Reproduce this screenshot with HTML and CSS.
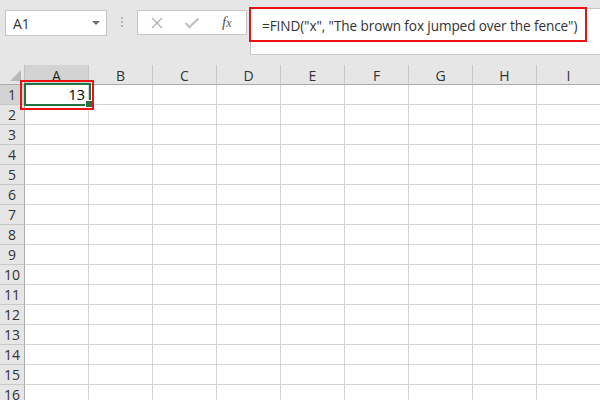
FILE: index.html
```html
<!DOCTYPE html>
<html>
<head>
<meta charset="utf-8">
<link rel="stylesheet" href="styles.css">
</head>
<body>
<div class="app">
  <div class="toolbar">
    <div class="namebox">
      <span class="ref">A1</span>
      <span class="caret"></span>
    </div>
    <div class="grip"><i></i><i></i><i></i></div>
    <div class="fbuttons">
      <svg class="ico" width="14" height="12" viewBox="0 0 14 12"><path d="M2 1 L12 11 M12 1 L2 11" stroke="#b3b3b3" stroke-width="1.3" fill="none"/></svg>
      <svg class="ico" width="16" height="12" viewBox="0 0 16 12"><path d="M1.5 6 L5.5 10 L14.5 1.5" stroke="#c4c4c4" stroke-width="2.4" fill="none"/></svg>
      <span class="fx"><i>f</i><i class="x">x</i></span>
    </div>
    <div class="formula">
      <span class="ftext">=FIND("x", "The brown fox jumped over the fence")</span>
      <div class="hilite"></div>
    </div>
  </div>
  <div class="sheet">
    <div class="grid">
      <div class="corner"><span class="tri"></span></div>
      <div class="ch sel">A</div><div class="ch">B</div><div class="ch">C</div><div class="ch">D</div><div class="ch">E</div><div class="ch">F</div><div class="ch">G</div><div class="ch">H</div><div class="ch">I</div>
      <div class="rh sel">1</div><div class="c num">13</div><div class="c"></div><div class="c"></div><div class="c"></div><div class="c"></div><div class="c"></div><div class="c"></div><div class="c"></div><div class="c"></div>
      <div class="rh">2</div><div class="c"></div><div class="c"></div><div class="c"></div><div class="c"></div><div class="c"></div><div class="c"></div><div class="c"></div><div class="c"></div><div class="c"></div>
      <div class="rh">3</div><div class="c"></div><div class="c"></div><div class="c"></div><div class="c"></div><div class="c"></div><div class="c"></div><div class="c"></div><div class="c"></div><div class="c"></div>
      <div class="rh">4</div><div class="c"></div><div class="c"></div><div class="c"></div><div class="c"></div><div class="c"></div><div class="c"></div><div class="c"></div><div class="c"></div><div class="c"></div>
      <div class="rh">5</div><div class="c"></div><div class="c"></div><div class="c"></div><div class="c"></div><div class="c"></div><div class="c"></div><div class="c"></div><div class="c"></div><div class="c"></div>
      <div class="rh">6</div><div class="c"></div><div class="c"></div><div class="c"></div><div class="c"></div><div class="c"></div><div class="c"></div><div class="c"></div><div class="c"></div><div class="c"></div>
      <div class="rh">7</div><div class="c"></div><div class="c"></div><div class="c"></div><div class="c"></div><div class="c"></div><div class="c"></div><div class="c"></div><div class="c"></div><div class="c"></div>
      <div class="rh">8</div><div class="c"></div><div class="c"></div><div class="c"></div><div class="c"></div><div class="c"></div><div class="c"></div><div class="c"></div><div class="c"></div><div class="c"></div>
      <div class="rh">9</div><div class="c"></div><div class="c"></div><div class="c"></div><div class="c"></div><div class="c"></div><div class="c"></div><div class="c"></div><div class="c"></div><div class="c"></div>
      <div class="rh">10</div><div class="c"></div><div class="c"></div><div class="c"></div><div class="c"></div><div class="c"></div><div class="c"></div><div class="c"></div><div class="c"></div><div class="c"></div>
      <div class="rh">11</div><div class="c"></div><div class="c"></div><div class="c"></div><div class="c"></div><div class="c"></div><div class="c"></div><div class="c"></div><div class="c"></div><div class="c"></div>
      <div class="rh">12</div><div class="c"></div><div class="c"></div><div class="c"></div><div class="c"></div><div class="c"></div><div class="c"></div><div class="c"></div><div class="c"></div><div class="c"></div>
      <div class="rh">13</div><div class="c"></div><div class="c"></div><div class="c"></div><div class="c"></div><div class="c"></div><div class="c"></div><div class="c"></div><div class="c"></div><div class="c"></div>
      <div class="rh">14</div><div class="c"></div><div class="c"></div><div class="c"></div><div class="c"></div><div class="c"></div><div class="c"></div><div class="c"></div><div class="c"></div><div class="c"></div>
      <div class="rh">15</div><div class="c"></div><div class="c"></div><div class="c"></div><div class="c"></div><div class="c"></div><div class="c"></div><div class="c"></div><div class="c"></div><div class="c"></div>
      <div class="rh">16</div><div class="c"></div><div class="c"></div><div class="c"></div><div class="c"></div><div class="c"></div><div class="c"></div><div class="c"></div><div class="c"></div><div class="c"></div>
    </div>
    <div class="selbox"><span class="handle"></span></div>
    <div class="redbox"></div>
  </div>
</div>
</body>
</html>
```
FILE: styles.css
```css
html, body {
  margin: 0;
  padding: 0;
}
body {
  background: #e6e6e6;
  font-family: "Open Sans", "Noto Sans", sans-serif;
  overflow: hidden;
}
.app {
  width: 600px;
  height: 400px;
  overflow: hidden;
}
.toolbar {
  height: 65px;
  display: flex;
  align-items: flex-start;
  padding-top: 8px;
  padding-left: 5px;
  box-sizing: border-box;
}
.namebox {
  margin-top: 2px;
  width: 102px;
  height: 26px;
  box-sizing: border-box;
  background: #fff;
  border: 1px solid #c6c6c6;
  display: flex;
  align-items: center;
  justify-content: space-between;
  padding: 0 6px 0 7px;
}
.ref {
  font-size: 14px;
  color: #333;
}
.caret {
  width: 0;
  height: 0;
  border-left: 4px solid transparent;
  border-right: 4px solid transparent;
  border-top: 4px solid #707070;
}
.grip {
  margin: 9px 0 0 14px;
  width: 3px;
  display: flex;
  flex-direction: column;
  gap: 2px;
}
.grip i {
  width: 2px;
  height: 2px;
  background: #b5b5b5;
}
.fbuttons {
  margin: 2px 0 0 13px;
  width: 110px;
  height: 25px;
  box-sizing: border-box;
  background: #fff;
  border: 1px solid #c6c6c6;
  display: flex;
  align-items: center;
  padding-left: 12px;
}
.fbuttons .ico:nth-child(2) {
  margin-left: 20px;
}
.fx {
  margin-left: 22px;
  font-family: "Liberation Serif", serif;
  font-style: italic;
  color: #555;
  font-size: 15px;
  line-height: 1;
}
.fx i.x {
  font-size: 12px;
}
.formula {
  position: relative;
  margin-left: 3px;
  flex: 1;
  height: 47px;
  box-sizing: border-box;
  background: #fff;
  border: 1px solid #c6c6c6;
  border-right: none;
  padding: 5px 0 0 11px;
}
.ftext {
  font-size: 13.6px;
  color: #333;
  white-space: nowrap;
  letter-spacing: -0.1px;
}
.hilite {
  position: absolute;
  left: -2px;
  top: -2px;
  width: 338px;
  height: 35px;
  box-sizing: border-box;
  border: 2px solid #ee1111;
}
.sheet {
  position: relative;
}
.grid {
  display: grid;
  grid-template-columns: 25px repeat(9, 64px);
  grid-auto-rows: 20px;
  background: #fff;
}
.corner {
  position: relative;
  background: #e6e6e6;
  border-right: 1px solid #c0c0c0;
  border-bottom: 1px solid #ababab;
}
.tri {
  position: absolute;
  right: 3px;
  bottom: 3px;
  width: 0;
  height: 0;
  border-left: 11px solid transparent;
  border-bottom: 11px solid #b8b8b8;
}
.ch, .rh, .c {
  box-sizing: border-box;
}
.ch {
  background: #e6e6e6;
  border-right: 1px solid #c8c8c8;
  border-bottom: 1px solid #ababab;
  font-size: 14px;
  color: #333;
  display: flex;
  align-items: center;
  justify-content: center;
  padding-top: 1px;
}
.ch.sel {
  background: #d3d3d3;
  color: #222;
}
.rh {
  background: #e6e6e6;
  border-right: 1px solid #ababab;
  border-bottom: 1px solid #c8c8c8;
  font-size: 14px;
  color: #333;
  display: flex;
  align-items: center;
  justify-content: center;
}
.rh.sel {
  background: #d3d3d3;
}
.c {
  border-right: 1px solid #d4d4d4;
  border-bottom: 1px solid #d4d4d4;
}
.num {
  font-size: 14.5px;
  color: #000;
  display: flex;
  align-items: center;
  justify-content: flex-end;
  padding-right: 3px;
}
.selbox {
  position: absolute;
  left: 24px;
  top: 18px;
  width: 67px;
  height: 23px;
  box-sizing: border-box;
  border: 2px solid #217346;
}
.handle {
  position: absolute;
  right: -4px;
  bottom: -4px;
  width: 6px;
  height: 6px;
  background: #217346;
  border: 1px solid #fff;
}
.redbox {
  position: absolute;
  left: 20px;
  top: 15px;
  width: 74px;
  height: 30px;
  box-sizing: border-box;
  border: 2px solid #ee1111;
}
```
